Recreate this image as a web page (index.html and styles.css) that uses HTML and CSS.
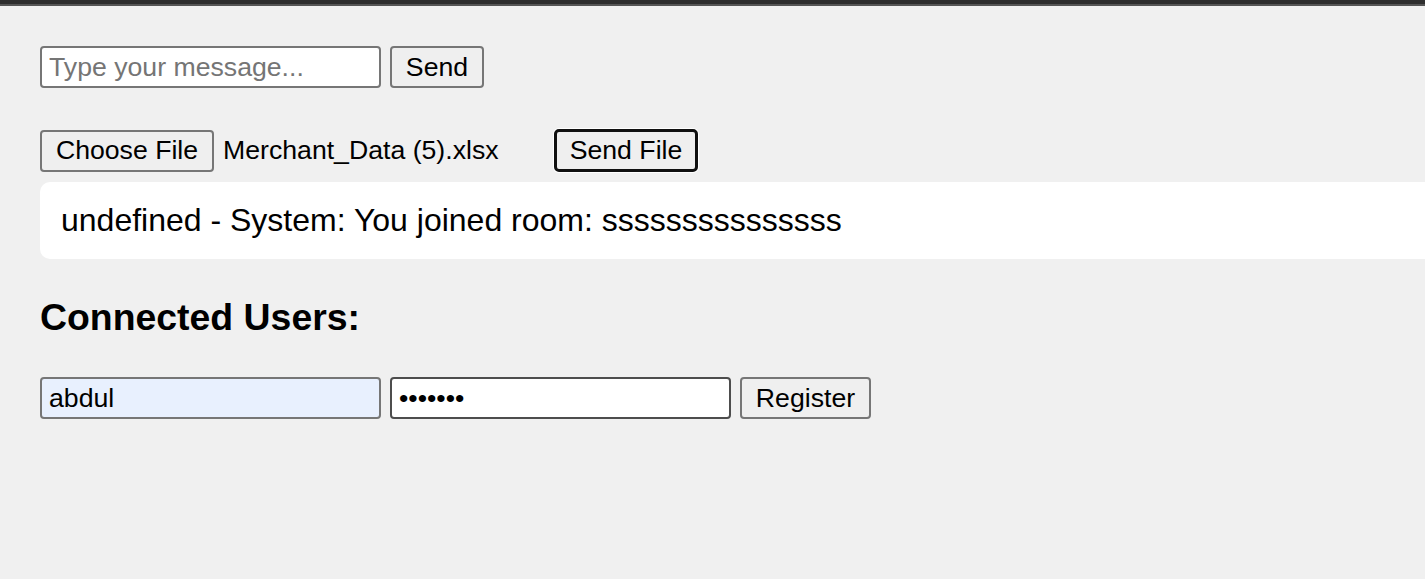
FILE: index.html
```html
<!DOCTYPE html>
<html>
<head>
<meta charset="utf-8">
<title>Chat</title>
<link rel="stylesheet" href="styles.css">
</head>
<body>
<div class="topbar"></div>
<div class="page">
  <div class="row row-message">
    <input class="field" type="text" placeholder="Type your message...">
    <button class="btn btn-send">Send</button>
  </div>
  <div class="row row-file">
    <div class="file-picker">
      <button class="btn btn-choose">Choose File</button>
      <span class="file-name">Merchant_Data (5).xlsx</span>
    </div>
    <button class="btn btn-sendfile">Send File</button>
  </div>
  <div class="messages">
    <div class="message">undefined - System: You joined room: sssssssssssssss</div>
  </div>
  <h3 class="users-title">Connected Users:</h3>
  <div class="row row-register">
    <input class="field field-autofill" type="text" value="abdul">
    <input class="field field-pass" type="password" value="1234567">
    <button class="btn btn-register">Register</button>
  </div>
</div>
</body>
</html>
```

FILE: styles.css
```css
html, body {
  margin: 0;
  padding: 0;
}
body {
  background: #f0f0f0;
  font-family: "Liberation Sans", Arial, sans-serif;
  color: #000;
  overflow: hidden;
  height: 579px;
}
.topbar {
  height: 4px;
  background: #2e2e2e;
  border-bottom: 2px solid #555555;
}
.page {
  padding: 40px 0 0 40px;
}
.row {
  display: flex;
  align-items: center;
  gap: 9px;
}
.field {
  box-sizing: border-box;
  width: 341px;
  height: 42px;
  margin: 0;
  border: 2px solid #767676;
  border-radius: 4px;
  background: #ffffff;
  padding: 0 7px;
  font-family: "Liberation Sans", Arial, sans-serif;
  font-size: 26.67px;
  color: #000;
  outline: none;
}
.field::placeholder {
  color: #757575;
}
.field-autofill {
  background: #e8f0fe;
}
.field-pass {
  border-color: #4d4d4d;
}
.btn {
  box-sizing: border-box;
  height: 42px;
  margin: 0;
  padding: 0;
  text-align: center;
  white-space: nowrap;
  background: #efefef;
  border: 2px solid #767676;
  border-radius: 4px;
  font-family: "Liberation Sans", Arial, sans-serif;
  font-size: 26.67px;
  color: #000;
}
.btn-send {
  width: 94px;
}
.row-file {
  margin-top: 41px;
}
.file-picker {
  display: flex;
  align-items: center;
  gap: 9px;
  width: 505px;
}
.btn-choose {
  width: 174px;
}
.file-name {
  font-size: 26.67px;
  white-space: nowrap;
}
.btn-sendfile {
  width: 144px;
  height: 43px;
  border: 3px solid #101010;
  border-radius: 5px;
  box-shadow: 0 0 0 1px #ffffff;
}
.messages {
  margin-top: 10px;
}
.message {
  background: #ffffff;
  border-radius: 10px 0 0 10px;
  padding: 20px 21px;
  font-size: 32px;
  line-height: 37px;
  white-space: nowrap;
}
.users-title {
  margin: 37px 0 38px;
  font-size: 37.4px;
  line-height: 43px;
  font-weight: bold;
}
.btn-register {
  width: 131px;
}
```
